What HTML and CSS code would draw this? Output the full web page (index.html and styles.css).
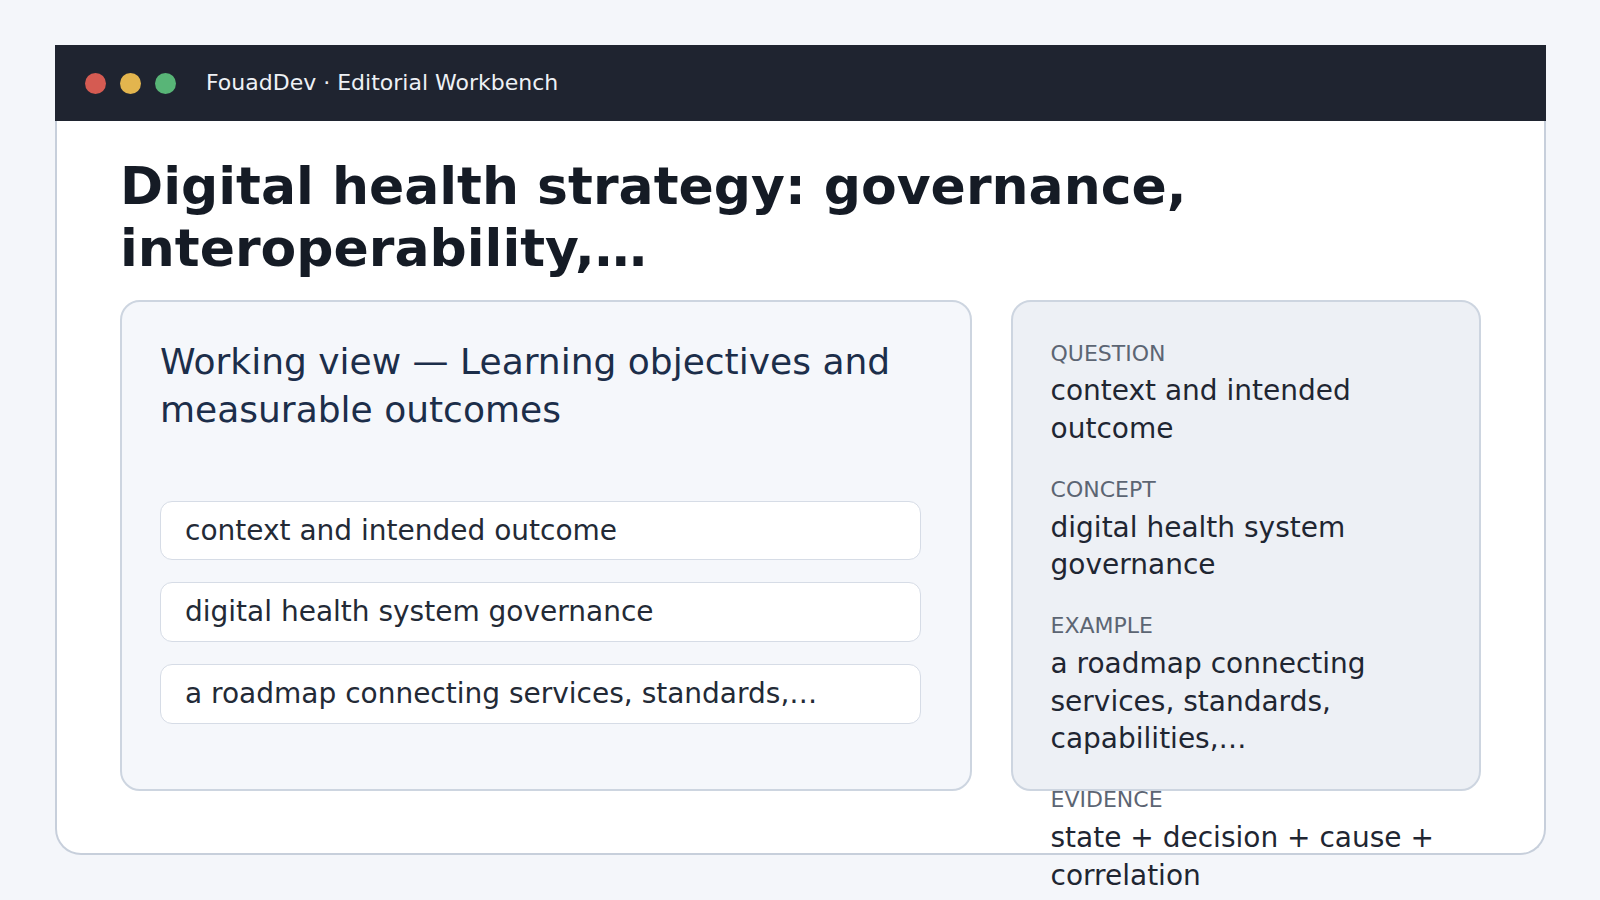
FILE: index.html
```html
<!DOCTYPE html>
<html lang="en">
<head>
    <meta charset="UTF-8">
    <meta name="viewport" content="width=device-width, initial-scale=1.0">
    <title>FouadDev · Editorial Workbench</title>
    <link rel="stylesheet" href="styles.css">
</head>
<body>
    <div class="window">
        <header class="titlebar">
            <div class="dots">
                <span class="dot red"></span>
                <span class="dot yellow"></span>
                <span class="dot green"></span>
            </div>
            <span class="app-title">FouadDev · Editorial Workbench</span>
        </header>
        <main class="content">
            <h1>Digital health strategy: governance, interoperability,…</h1>
            <div class="columns">
                <section class="card working">
                    <h2>Working view — Learning objectives and measurable outcomes</h2>
                    <div class="items">
                        <div class="item">context and intended outcome</div>
                        <div class="item">digital health system governance</div>
                        <div class="item">a roadmap connecting services, standards,…</div>
                    </div>
                </section>
                <aside class="card notes">
                    <div class="note">
                        <div class="label">Question</div>
                        <div class="value">context and intended outcome</div>
                    </div>
                    <div class="note">
                        <div class="label">Concept</div>
                        <div class="value">digital health system governance</div>
                    </div>
                    <div class="note">
                        <div class="label">Example</div>
                        <div class="value">a roadmap connecting services, standards, capabilities,…</div>
                    </div>
                    <div class="note">
                        <div class="label">Evidence</div>
                        <div class="value">state + decision + cause + correlation</div>
                    </div>
                </aside>
            </div>
        </main>
    </div>
</body>
</html>
```

FILE: styles.css
```css
* {
    box-sizing: border-box;
}

html, body {
    height: 100%;
}

body {
    margin: 0;
    padding: 45px 54px 45px 55px;
    background-color: #f4f6fa;
    font-family: 'DejaVu Sans', 'Liberation Sans', sans-serif;
    color: #1f2632;
}

.window {
    height: 810px;
    display: flex;
    flex-direction: column;
    background-color: #ffffff;
    border: 2px solid #c7cfdb;
    border-top: none;
    border-radius: 0 0 26px 26px;
}

.titlebar {
    height: 76px;
    margin: 0 -2px;
    display: flex;
    align-items: center;
    padding: 0 30px;
    background-color: #1f2430;
}

.dots {
    display: flex;
    gap: 14px;
    margin-right: 30px;
}

.dot {
    width: 21px;
    height: 21px;
    border-radius: 50%;
}

.dot.red {
    background-color: #d55b52;
}

.dot.yellow {
    background-color: #e3b54e;
}

.dot.green {
    background-color: #58b577;
}

.app-title {
    color: #eef1f5;
    font-size: 22px;
    margin-top: -2px;
}

.content {
    flex: 1;
    min-height: 0;
    display: flex;
    flex-direction: column;
    padding: 34px 63px 62px 63px;
}

h1 {
    margin: 0 0 20px;
    font-size: 52px;
    line-height: 1.2;
    font-weight: bold;
    color: #151b25;
}

.columns {
    flex: 1;
    min-height: 0;
    display: grid;
    grid-template-columns: minmax(0, 1.81fr) minmax(0, 1fr);
    grid-template-rows: minmax(0, 1fr);
    gap: 39px;
}

.card {
    border: 2px solid #cdd5e0;
    border-radius: 20px;
    padding: 36px 38px;
}

.working {
    background-color: #f5f7fb;
}

.working h2 {
    margin: 0 0 67px;
    font-size: 36px;
    line-height: 1.33;
    font-weight: normal;
    color: #1c2e4a;
}

.items {
    display: flex;
    flex-direction: column;
    gap: 22px;
    max-width: 761px;
}

.item {
    background-color: #ffffff;
    border: 1px solid #d6dce6;
    border-radius: 12px;
    padding: 10px 24px;
    font-size: 28px;
    line-height: 1.35;
    color: #232a36;
}

.notes {
    background-color: #edf0f5;
    display: flex;
    flex-direction: column;
    gap: 28px;
    padding-top: 38px;
}

.label {
    font-size: 22px;
    line-height: 1.3;
    text-transform: uppercase;
    color: #5c6573;
    margin-bottom: 4px;
}

.value {
    font-size: 28px;
    line-height: 1.35;
    color: #1f2632;
}
```
